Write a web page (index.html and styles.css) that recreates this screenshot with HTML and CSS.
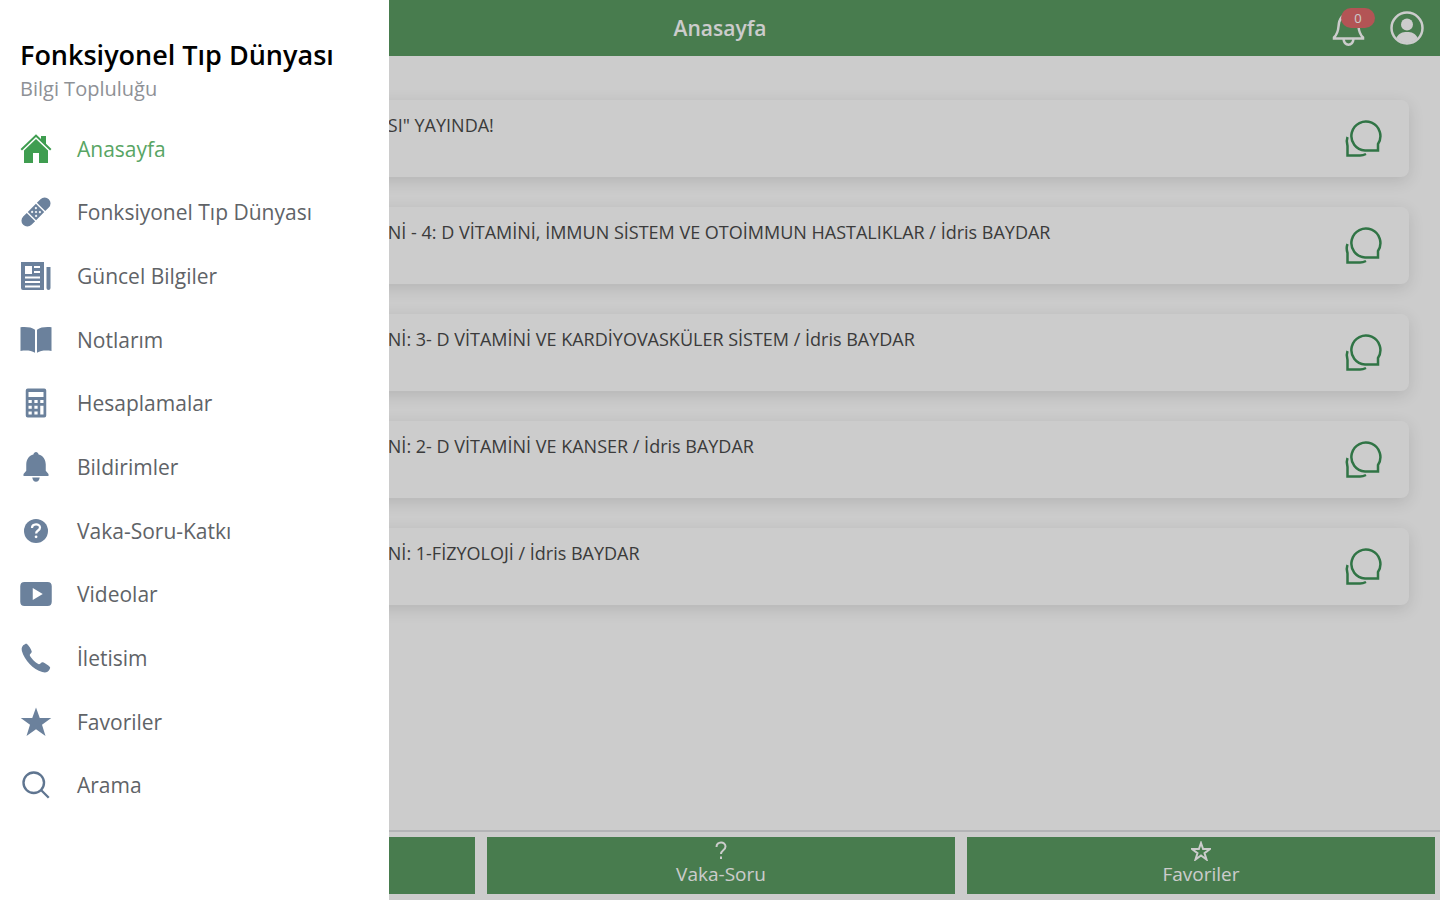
FILE: index.html
```html
<!DOCTYPE html>
<html lang="tr">
<head>
    <meta charset="UTF-8">
    <meta name="viewport" content="width=device-width, initial-scale=1.0">
    <title>Fonksiyonel Tıp Dünyası</title>
    <link rel="stylesheet" href="styles.css">
</head>
<body>
    <!-- Shared icon -->
    <svg class="sprite" aria-hidden="true">
        <symbol id="chat" viewBox="0 0 40 40">
            <path d="M34 31.500V25A14.500 14.500 0 1 0 21 31.500Z"/>
            <path d="M3.500 18C2 22 2.500 24 3.500 27v9.500H16c2 0 4-.5 6-1.500"/>
        </symbol>
    </svg>

    <div class="page">
        <header class="toolbar">
            <h1>Anasayfa</h1>
            <div class="toolbar-actions">
                <button class="icon-button" aria-label="Bildirimler">
                    <svg viewBox="0 0 36 36"><path d="M3 28.500h29v-1c-3-3-4-5-4.500-11C27 9 24 4.500 17.500 4.500S8 9 7.500 16.500C7 22.500 6 24.500 3 27.500Z"/><path d="M12.500 29c1 7.500 9 7.500 10 0"/></svg>
                    <span class="badge">0</span>
                </button>
                <button class="icon-button" aria-label="Profil">
                    <svg viewBox="0 0 36 36"><circle cx="18" cy="18" r="15.500"/><circle class="solid" cx="18" cy="14.500" r="6"/><path class="solid" d="M7.500 28c2-5 6-6 10.500-6s8.500 1 10.500 6c-6 6.500-15 6.500-21 0Z"/></svg>
                </button>
            </div>
        </header>

        <main class="content">
            <article class="card"><h2>SI" YAYINDA!</h2><button class="chat-button" aria-label="Yorumlar"><svg><use href="#chat"/></svg></button></article>
            <article class="card"><h2>Nİ - 4: D VİTAMİNİ, İMMUN SİSTEM VE OTOİMMUN HASTALIKLAR / İdris BAYDAR</h2><button class="chat-button" aria-label="Yorumlar"><svg><use href="#chat"/></svg></button></article>
            <article class="card"><h2>Nİ: 3- D VİTAMİNİ VE KARDİYOVASKÜLER SİSTEM / İdris BAYDAR</h2><button class="chat-button" aria-label="Yorumlar"><svg><use href="#chat"/></svg></button></article>
            <article class="card"><h2>Nİ: 2- D VİTAMİNİ VE KANSER / İdris BAYDAR</h2><button class="chat-button" aria-label="Yorumlar"><svg><use href="#chat"/></svg></button></article>
            <article class="card"><h2>Nİ: 1-FİZYOLOJİ / İdris BAYDAR</h2><button class="chat-button" aria-label="Yorumlar"><svg><use href="#chat"/></svg></button></article>
        </main>

        <footer class="tabs">
            <button aria-label="Anasayfa"></button>
            <button>
                <svg viewBox="0 0 20 20"><path d="M5.500 6C5.500 0 14.500 0 14.500 5.500c0 4-4.500 3.500-4.500 7.500M10 15.500v2.500"/></svg>
                Vaka-Soru
            </button>
            <button>
                <svg viewBox="0 0 20 20"><path d="m10 2 2.100 6H19l-5.500 4.100 2 6.400-5.500-4-5.500 4 2-6.400L1 8h6.900Z"/></svg>
                Favoriler
            </button>
        </footer>
    </div>

    <div class="backdrop"></div>

    <!-- Side menu -->
    <aside class="drawer">
        <div class="drawer-title">Fonksiyonel Tıp Dünyası</div>
        <p class="drawer-note">Bilgi Topluluğu</p>
        <nav class="menu">
            <a class="active" href="#">
                <svg viewBox="0 0 512 512"><path d="M256 96 64 279v201h144V320h96v160h144V279Z"/><path d="M416 173V48h-80v48l-80-76L9 256l22 24L256 65l225 215 22-24Z"/></svg>
                Anasayfa
            </a>
            <a href="#">
                <svg viewBox="0 0 512 512">
                    <g transform="rotate(-45 256 256)">
                        <path d="M142 162H60a94 94 0 0 0 0 188h82ZM370 162h82a94 94 0 0 1 0 188h-82Z"/>
                        <path fill-rule="evenodd" d="M164 162h184v188H164Zm34 34v30h30v-30Zm86 0v30h30v-30Zm-43 45v30h30v-30Zm-43 45v30h30v-30Zm86 0v30h30v-30Z"/>
                    </g>
                </svg>
                Fonksiyonel Tıp Dünyası
            </a>
            <a href="#">
                <svg viewBox="0 0 512 512"><path fill-rule="evenodd" d="M16 32h368v448H48a32 32 0 0 1-32-32Zm64 64v128h112V96Zm144 0v32h96V96Zm0 80v32h96v-32ZM80 264v32h240v-32Zm0 72v32h240v-32Zm0 72v32h240v-32Z"/><path d="M424 112h64v336a32 32 0 0 1-64 0Z"/></svg>
                Güncel Bilgiler
            </a>
            <a href="#">
                <svg viewBox="0 0 512 512"><path d="M8 52c90-8 180 0 232 38v370c-60-38-140-42-232-30ZM504 52c-90-8-180 0-232 38v370c60-38 140-42 232-30Z"/></svg>
                Notlarım
            </a>
            <a href="#">
                <svg viewBox="0 0 512 512"><path fill-rule="evenodd" d="M124 24h264a32 32 0 0 1 32 32v400a32 32 0 0 1-32 32H124a32 32 0 0 1-32-32V56a32 32 0 0 1 32-32Zm12 56v80h240V80Zm0 128v48h52v-48Zm94 0v48h52v-48Zm94 0v48h52v-48ZM136 300v48h52v-48Zm94 0v48h52v-48Zm94 0v140h52V300ZM136 392v48h52v-48Zm94 0v48h52v-48Z"/></svg>
                Hesaplamalar
            </a>
            <a href="#">
                <svg viewBox="0 0 512 512"><path d="M456 400H56v-32l44-52V216c0-78 44-142 114-160 6-24 22-40 42-40s36 16 42 40c70 18 114 82 114 160v100l44 52ZM196 424h120c-6 44-30 68-60 68s-54-24-60-68Z"/></svg>
                Bildirimler
            </a>
            <a href="#">
                <svg viewBox="0 0 512 512"><circle cx="256" cy="256" r="192"/><path class="cut" d="M192 208c0-72 128-76 128-8 0 50-62 46-62 96"/><circle class="dot" cx="257" cy="348" r="22"/></svg>
                Vaka-Soru-Katkı
            </a>
            <a href="#">
                <svg viewBox="0 0 512 512"><path fill-rule="evenodd" d="M72 64h368q68 0 68 68v248q0 68-68 68H72q-68 0-68-68V132q0-68 68-68Zm132 96v192l160-96Z"/></svg>
                Videolar
            </a>
            <a href="#">
                <svg viewBox="0 0 512 512"><path d="M478 400c-26-30-84-66-110-76-28-8-40 30-66 32-34-8-130-96-146-144-4-24 36-38 32-62-12-36-44-88-72-114-10-10-24-8-36-2C34 52 18 92 30 142c42 150 180 292 326 338 54 16 92 4 118-44 8-14 12-26 4-36Z"/></svg>
                İletisim
            </a>
            <a href="#">
                <svg viewBox="0 0 512 512"><path d="m256 24 60 168h184L352 298l56 180-152-108-152 108 56-180L12 192h184Z"/></svg>
                Favoriler
            </a>
            <a href="#">
                <svg class="line" viewBox="0 0 512 512"><circle cx="220" cy="220" r="164"/><path d="m336 336 124 124"/></svg>
                Arama
            </a>
        </nav>
    </aside>
</body>
</html>
```
FILE: styles.css
```css
* {
    box-sizing: border-box;
}

body {
    margin: 0;
    font-family: "Open Sans", "Noto Sans", sans-serif;
    color: #4d5156;
    background: #fff;
}

h1, h2, p {
    margin: 0;
    font-weight: 400;
}

button {
    padding: 0;
    border: 0;
    background: none;
    color: inherit;
    font: inherit;
    cursor: pointer;
}

.sprite {
    position: absolute;
    width: 0;
    height: 0;
}

/* Page */
.page {
    display: flex;
    flex-direction: column;
    min-height: 100vh;
}

.toolbar {
    display: grid;
    grid-template-columns: 1fr auto 1fr;
    align-items: center;
    height: 56px;
    padding: 0 15px;
    background: #5a9c62;
    color: #fff;
}

.toolbar h1 {
    grid-column: 2;
    font-size: 21px;
    line-height: 28px;
    font-weight: 600;
}

.toolbar-actions {
    display: flex;
    justify-content: flex-end;
    gap: 22px;
}

.icon-button {
    position: relative;
    height: 36px;
}

.icon-button svg {
    display: block;
    width: 36px;
    height: 36px;
    fill: none;
    stroke: currentColor;
    stroke-width: 2.5;
}

.icon-button .solid {
    fill: currentColor;
    stroke: none;
}

.badge {
    position: absolute;
    top: -2px;
    right: -8px;
    width: 34px;
    border-radius: 10px;
    background: #e0696b;
    font-size: 13px;
    line-height: 20px;
}

.content {
    flex: 1;
    display: flex;
    flex-direction: column;
    gap: 30px;
    padding: 44px 31px;
}

.card {
    display: flex;
    justify-content: space-between;
    height: 77px;
    padding: 13px 25px 13px calc(27vw - 32px);
    border-radius: 8px;
    box-shadow: 0 4px 16px rgba(0, 0, 0, 0.12);
}

.card h2 {
    font-size: 18px;
    line-height: 24px;
    color: #4a4a4a;
}

.chat-button {
    align-self: center;
}

.chat-button svg {
    display: block;
    width: 40px;
    height: 40px;
    fill: none;
    stroke: #3c9257;
    stroke-width: 2.5;
}

.tabs {
    display: grid;
    grid-template-columns: repeat(3, 1fr);
    gap: 12px;
    padding: 5px 5px 6px 7px;
    border-top: 2px solid #e0e2e4;
}

.tabs button {
    display: flex;
    flex-direction: column;
    align-items: center;
    height: 57px;
    padding-top: 4px;
    background: #5a9c62;
    color: #fff;
    font-size: 19px;
    line-height: 26px;
}

.tabs svg {
    width: 20px;
    height: 20px;
    fill: none;
    stroke: currentColor;
    stroke-width: 2;
}

.backdrop {
    position: fixed;
    inset: 0;
    background: rgba(0, 0, 0, 0.2);
}

/* Side menu */
.drawer {
    position: fixed;
    top: 0;
    bottom: 0;
    left: 0;
    display: flex;
    flex-direction: column;
    width: 27vw;
    padding: 37px 20px 83px;
    background: #fff;
}

.drawer-title {
    color: #000;
    font-size: 27px;
    line-height: 36px;
    font-weight: 600;
    white-space: nowrap;
}

.drawer-note {
    margin-bottom: 12px;
    color: #8e9196;
    font-size: 20px;
    line-height: 32px;
}

.menu {
    flex: 1;
    display: flex;
    flex-direction: column;
}

.menu a {
    flex: 1;
    display: flex;
    align-items: center;
    gap: 25px;
    color: #606367;
    font-size: 21px;
    text-decoration: none;
    white-space: nowrap;
}

.menu svg {
    width: 32px;
    height: 32px;
    fill: #6b819c;
}

.menu .active {
    color: #58a564;
}

.menu .active svg {
    fill: #3f9d50;
}

.menu .cut {
    fill: none;
    stroke: #fff;
    stroke-width: 36;
}

.menu .dot {
    fill: #fff;
}

.menu .line {
    fill: none;
    stroke: #5f7590;
    stroke-width: 38;
}
```
